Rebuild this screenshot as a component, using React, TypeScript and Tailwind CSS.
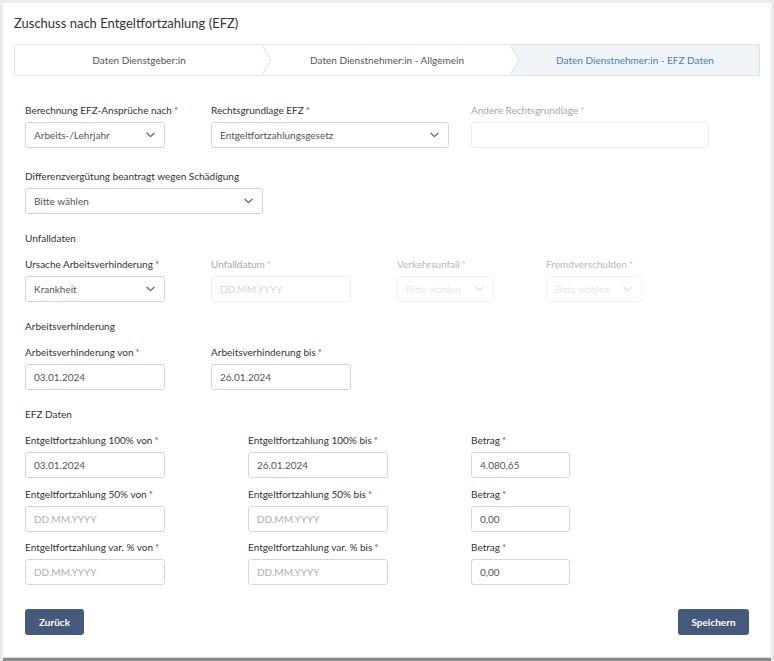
import React from "react";

const font = { fontFamily: "Lato, 'Open Sans', 'Liberation Sans', sans-serif" };

function Chevron({ color = "#666" }: { color?: string }) {
  return (
    <svg width="9" height="6" viewBox="0 0 9 6" fill="none">
      <path d="M1 1.2 L4.5 4.6 L8 1.2" stroke={color} strokeWidth="1.3" strokeLinecap="round" strokeLinejoin="round" />
    </svg>
  );
}

function Label({ text, req = true, faded = 0 }: { text: string; req?: boolean; faded?: number }) {
  const color = faded === 2 ? "text-[#b8b8b8]" : faded === 1 ? "text-[#a8a8a8]" : "text-[#333]";
  return (
    <div className={`h-[14px] leading-[14px] text-[10px] whitespace-nowrap ${color}`}>
      {text}
      {req && <span className={faded ? "text-[#e2b4b4] ml-[2px]" : "text-[#c0392b] ml-[2px]"}>*</span>}
    </div>
  );
}

function Input({ value, placeholder, w, faded = false }: { value?: string; placeholder?: string; w: string; faded?: boolean }) {
  return (
    <div
      className={`${w} h-[26px] mt-[5px] rounded-[3px] border ${faded ? "border-[#ededed]" : "border-[#d6d6d6]"} bg-white flex items-center pl-[8px] text-[10px]`}
    >
      {value ? (
        <span className="text-[#555]">{value}</span>
      ) : placeholder ? (
        <span className={faded ? "text-[#d6d6d6]" : "text-[#b0b0b0]"}>{placeholder}</span>
      ) : null}
    </div>
  );
}

function Select({ value, w, faded = false }: { value: string; w: string; faded?: boolean }) {
  return (
    <div
      className={`${w} h-[26px] mt-[5px] rounded-[3px] border ${faded ? "border-[#f3f3f3]" : "border-[#d6d6d6]"} bg-white flex items-center justify-between pl-[8px] pr-[9px] text-[10px]`}
    >
      <span className={faded ? "text-[#e8e8e8]" : "text-[#555]"}>{value}</span>
      <Chevron color={faded ? "#e0e0e0" : "#666"} />
    </div>
  );
}

function Section({ text }: { text: string }) {
  return <div className="h-[14px] leading-[14px] text-[10px] text-[#333]">{text}</div>;
}

function Step({ text, active, arrow }: { text: string; active?: boolean; arrow?: boolean }) {
  return (
    <div
      className={`relative flex-1 flex items-center justify-center text-[10px] ${active ? "bg-[#f1f4f6] text-[#4f7cb1]" : "bg-white text-[#555]"}`}
    >
      {text}
      {arrow && (
        <svg className="absolute right-[-9px] top-0 z-10" width="10" height="30" viewBox="0 0 10 30">
          <polygon points="0,0 9,15 0,30" fill="white" />
          <polyline points="0,0 9,15 0,30" fill="none" stroke="#e2e2e2" strokeWidth="1" />
        </svg>
      )}
    </div>
  );
}

export default function App() {
  return (
    <div style={font} className="w-[774px] h-[661px] bg-[#ebebeb] pl-[3px] pt-[3px] pr-[3px] overflow-hidden">
      <div className="bg-white h-[655px] border-b border-[#dadada] flex flex-col px-[11px] pt-[10px]">
        <div className="h-[20px] leading-[20px] text-[13px] text-[#333]">Zuschuss nach Entgeltfortzahlung (EFZ)</div>

        <div className="mt-[11px] h-[32px] border border-[#e2e2e2] rounded-[2px] flex">
          <Step text="Daten Dienstgeber:in" arrow />
          <Step text="Daten Dienstnehmer:in - Allgemein" arrow />
          <Step text="Daten Dienstnehmer:in - EFZ Daten" active />
        </div>

        <div className="pl-[11px] flex flex-col">
          <div className="mt-[27px] flex">
            <div className="w-[186px]">
              <Label text="Berechnung EFZ-Ansprüche nach" />
              <Select value="Arbeits-/Lehrjahr" w="w-[140px]" />
            </div>
            <div className="w-[260px]">
              <Label text="Rechtsgrundlage EFZ" />
              <Select value="Entgeltfortzahlungsgesetz" w="w-[238px]" />
            </div>
            <div>
              <Label text="Andere Rechtsgrundlage" faded={1} />
              <Input w="w-[238px]" faded />
            </div>
          </div>

          <div className="mt-[21px]">
            <Label text="Differenzvergütung beantragt wegen Schädigung" req={false} />
            <Select value="Bitte wählen" w="w-[238px]" />
          </div>

          <div className="mt-[17px]">
            <Section text="Unfalldaten" />
          </div>

          <div className="mt-[12px] flex">
            <div className="w-[186px]">
              <Label text="Ursache Arbeitsverhinderung" />
              <Select value="Krankheit" w="w-[140px]" />
            </div>
            <div className="w-[186px]">
              <Label text="Unfalldatum" faded={1} />
              <Input placeholder="DD.MM.YYYY" w="w-[140px]" faded />
            </div>
            <div className="w-[149px]">
              <Label text="Verkehrsunfall" faded={2} />
              <Select value="Bitte wählen" w="w-[97px]" faded />
            </div>
            <div>
              <Label text="Fremdverschulden" faded={2} />
              <Select value="Bitte wählen" w="w-[96px]" faded />
            </div>
          </div>

          <div className="mt-[17px]">
            <Section text="Arbeitsverhinderung" />
          </div>

          <div className="mt-[12px] flex">
            <div className="w-[186px]">
              <Label text="Arbeitsverhinderung von" />
              <Input value="03.01.2024" w="w-[140px]" />
            </div>
            <div>
              <Label text="Arbeitsverhinderung bis" />
              <Input value="26.01.2024" w="w-[140px]" />
            </div>
          </div>

          <div className="mt-[17px]">
            <Section text="EFZ Daten" />
          </div>

          {[
            { a: "Entgeltfortzahlung 100% von", b: "Entgeltfortzahlung 100% bis", v1: "03.01.2024", v2: "26.01.2024", amt: "4.080,65", mt: "mt-[12px]" },
            { a: "Entgeltfortzahlung 50% von", b: "Entgeltfortzahlung 50% bis", v1: "", v2: "", amt: "0,00", mt: "mt-[9px]" },
            { a: "Entgeltfortzahlung var. % von", b: "Entgeltfortzahlung var. % bis", v1: "", v2: "", amt: "0,00", mt: "mt-[8px]" },
          ].map((r) => (
            <div key={r.a} className={`${r.mt} flex`}>
              <div className="w-[223px]">
                <Label text={r.a} />
                <Input value={r.v1} placeholder="DD.MM.YYYY" w="w-[140px]" />
              </div>
              <div className="w-[223px]">
                <Label text={r.b} />
                <Input value={r.v2} placeholder="DD.MM.YYYY" w="w-[140px]" />
              </div>
              <div>
                <Label text="Betrag" />
                <Input value={r.amt} w="w-[99px]" />
              </div>
            </div>
          ))}

          <div className="mt-[24px] flex justify-between pr-[11px]">
            <button className="w-[59px] h-[26px] rounded-[3px] bg-[#45597b] text-white text-[10px] font-bold">Zurück</button>
            <button className="w-[71px] h-[26px] rounded-[3px] bg-[#45597b] text-white text-[10px] font-bold">Speichern</button>
          </div>
        </div>
      </div>
      <div className="h-[3px] bg-[#8a8a8a]" />
    </div>
  );
}
